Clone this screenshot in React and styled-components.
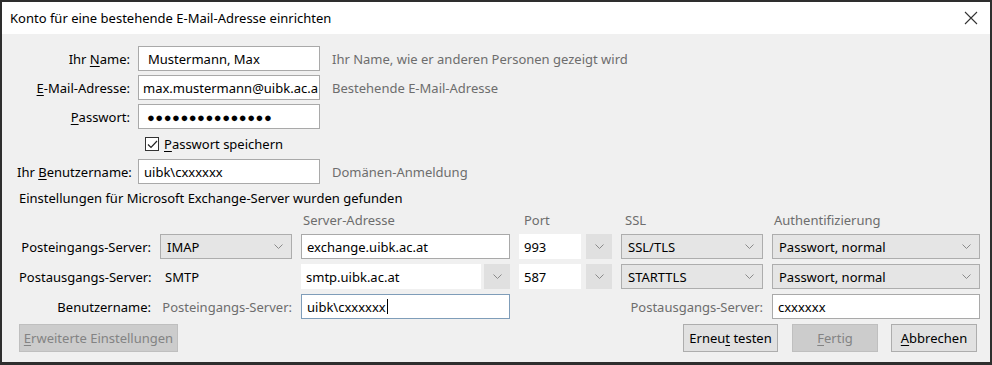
import React from 'react';
import styled, { createGlobalStyle } from 'styled-components';

const Global = createGlobalStyle`
  html, body {
    margin: 0;
    padding: 0;
    background: #ffffff;
  }
  * {
    box-sizing: border-box;
  }
`;

const Frame = styled.div`
  width: 992px;
  height: 365px;
  border: 2px solid #2e2e2e;
  border-bottom-width: 3px;
  display: flex;
  flex-direction: column;
  font-family: "Noto Sans", "Open Sans", sans-serif;
  font-size: 13px;
  color: #000;
  background: #f0f0f0;
  overflow: hidden;
`;

const TitleBar = styled.div`
  height: 32px;
  flex: 0 0 auto;
  background: #fff;
  display: flex;
  align-items: center;
  justify-content: space-between;
  padding: 0 12px 0 8px;
`;

const Title = styled.span`
  font-size: 13px;
`;

const Body = styled.div`
  flex: 1;
  padding: 12px 12px 0 15px;
  display: flex;
  flex-direction: column;
`;

const TopForm = styled.div`
  display: grid;
  grid-template-columns: 113px 182px 1fr;
  grid-template-rows: 25px 25px 25px 22px 25px;
  column-gap: 8px;
  row-gap: 4px;
  align-items: center;
`;

const Label = styled.label`
  text-align: right;
  white-space: nowrap;
  color: ${p => (p.$muted ? '#6d6d6d' : '#000')};
  u {
    text-decoration: underline;
    text-underline-offset: 2px;
  }
`;

const Hint = styled.span`
  color: #6d6d6d;
  padding-left: 4px;
  white-space: nowrap;
`;

const Field = styled.div`
  height: 25px;
  background: #fff;
  border: 1px solid ${p => (p.$focus ? '#7f9db9' : '#a9a9a9')};
  display: flex;
  align-items: center;
  padding: 0 ${p => (p.$pad ?? 5)}px;
  white-space: nowrap;
  overflow: hidden;
  letter-spacing: ${p => (p.$dots ? '0.5px' : 'normal')};
`;

const Caret = styled.span`
  display: inline-block;
  flex: 0 0 auto;
  width: 1px;
  height: 15px;
  background: #000;
  margin-left: 1px;
`;

const CheckRow = styled.div`
  grid-column: 2 / 4;
  display: flex;
  align-items: center;
  gap: 5px;
  padding-left: 7px;
  height: 22px;
  u {
    text-underline-offset: 2px;
  }
`;

const Box = styled.span`
  width: 14px;
  height: 14px;
  border: 1px solid #333;
  background: #fff;
  display: flex;
  align-items: center;
  justify-content: center;
`;

const Found = styled.div`
  margin-top: 5px;
  padding-left: 2px;
  height: 18px;
  display: flex;
  align-items: center;
`;

const ServerGrid = styled.div`
  margin-top: 4px;
  display: grid;
  grid-template-columns: 132px 132px 209px 93px 142px 208px;
  column-gap: 9px;
  grid-template-rows: 18px 25px 25px 25px;
  row-gap: 5px;
  align-items: center;
  padding-left: 2px;
`;

const Head = styled.span`
  color: #6d6d6d;
  padding-left: ${p => p.$indent || 2}px;
`;

const Plain = styled.span`
  padding-left: 5px;
`;

const Select = styled.div`
  height: 25px;
  background: #e5e5e5;
  border: 1px solid #adadad;
  display: flex;
  align-items: center;
  justify-content: space-between;
  padding: 0 8px 0 6px;
  white-space: nowrap;
`;

const Combo = styled.div`
  height: 25px;
  display: flex;
  align-items: stretch;
  gap: ${p => p.$gap || 3}px;
`;

const ComboEdit = styled.div`
  flex: 1;
  background: #fff;
  display: flex;
  align-items: center;
  padding-left: 5px;
`;

const ComboButton = styled.div`
  width: 26px;
  background: #e0e0e0;
  display: flex;
  align-items: center;
  justify-content: center;
`;

const ButtonRow = styled.div`
  margin-top: 5px;
  display: flex;
  align-items: center;
  padding-left: 2px;
  padding-right: 1px;
`;

const Button = styled.div`
  height: 28px;
  width: ${p => p.$w}px;
  background: ${p => (p.$disabled ? '#cccccc' : '#e1e1e1')};
  border: 1px solid ${p => (p.$disabled ? '#bfbfbf' : '#adadad')};
  color: ${p => (p.$disabled ? '#838383' : '#000')};
  display: flex;
  align-items: center;
  justify-content: center;
  margin-left: ${p => p.$ml || 0}px;
  white-space: nowrap;
  u {
    text-underline-offset: 2px;
  }
`;

const Spacer = styled.div`
  flex: 1;
`;

const Chevron = () => (
  <svg width="9" height="5" viewBox="0 0 9 5">
    <polyline points="0.5,0.5 4.5,4.5 8.5,0.5" fill="none" stroke="#8a8a8a" strokeWidth="1" />
  </svg>
);

const CloseIcon = () => (
  <svg width="14" height="14" viewBox="0 0 14 14">
    <path d="M1 1 L13 13 M13 1 L1 13" stroke="#333" strokeWidth="1.1" fill="none" />
  </svg>
);

const Check = () => (
  <svg width="11" height="9" viewBox="0 0 11 9">
    <polyline points="1,4.5 4,7.5 10,1" fill="none" stroke="#222" strokeWidth="1.2" />
  </svg>
);

export default function App() {
  return (
    <>
      <Global />
      <Frame>
        <TitleBar>
          <Title>Konto für eine bestehende E-Mail-Adresse einrichten</Title>
          <CloseIcon />
        </TitleBar>
        <Body>
          <TopForm>
            <Label>Ihr <u>N</u>ame:</Label>
            <Field $pad={9}>Mustermann, Max</Field>
            <Hint>Ihr Name, wie er anderen Personen gezeigt wird</Hint>

            <Label><u>E</u>-Mail-Adresse:</Label>
            <Field $pad={4}>max.mustermann@uibk.ac.a</Field>
            <Hint>Bestehende E-Mail-Adresse</Hint>

            <Label><u>P</u>asswort:</Label>
            <Field $pad={8} $dots>●●●●●●●●●●●●●●●</Field>
            <span />

            <span />
            <CheckRow>
              <Box><Check /></Box>
              <span><u>P</u>asswort speichern</span>
            </CheckRow>

            <Label>Ihr <u>B</u>enutzername:</Label>
            <Field>uibk\cxxxxxx</Field>
            <Hint>Domänen-Anmeldung</Hint>
          </TopForm>

          <Found>Einstellungen für Microsoft Exchange-Server wurden gefunden</Found>

          <ServerGrid>
            <span />
            <span />
            <Head>Server-Adresse</Head>
            <Head $indent={5}>Port</Head>
            <Head $indent={4}>SSL</Head>
            <Head>Authentifizierung</Head>

            <Label>Posteingangs-Server:</Label>
            <Select>IMAP<Chevron /></Select>
            <Field>exchange.uibk.ac.at</Field>
            <Combo $gap={5}>
              <ComboEdit>993</ComboEdit>
              <ComboButton><Chevron /></ComboButton>
            </Combo>
            <Select>SSL/TLS<Chevron /></Select>
            <Select>Passwort, normal<Chevron /></Select>

            <Label>Postausgangs-Server:</Label>
            <Plain>SMTP</Plain>
            <Combo>
              <ComboEdit>smtp.uibk.ac.at</ComboEdit>
              <ComboButton><Chevron /></ComboButton>
            </Combo>
            <Combo $gap={5}>
              <ComboEdit>587</ComboEdit>
              <ComboButton><Chevron /></ComboButton>
            </Combo>
            <Select>STARTTLS<Chevron /></Select>
            <Select>Passwort, normal<Chevron /></Select>

            <Label>Benutzername:</Label>
            <Label $muted>Posteingangs-Server:</Label>
            <Field $focus>uibk\cxxxxxx<Caret /></Field>
            <span />
            <Label $muted>Postausgangs-Server:</Label>
            <Field>cxxxxxx</Field>
          </ServerGrid>

          <ButtonRow>
            <Button $w={159} $disabled><span><u>E</u>rweiterte Einstellungen</span></Button>
            <Spacer />
            <Button $w={95}><span>Erneu<u>t</u> testen</span></Button>
            <Button $w={86} $ml={14} $disabled><span><u>F</u>ertig</span></Button>
            <Button $w={86} $ml={13}><span><u>A</u>bbrechen</span></Button>
          </ButtonRow>
        </Body>
      </Frame>
    </>
  );
}
